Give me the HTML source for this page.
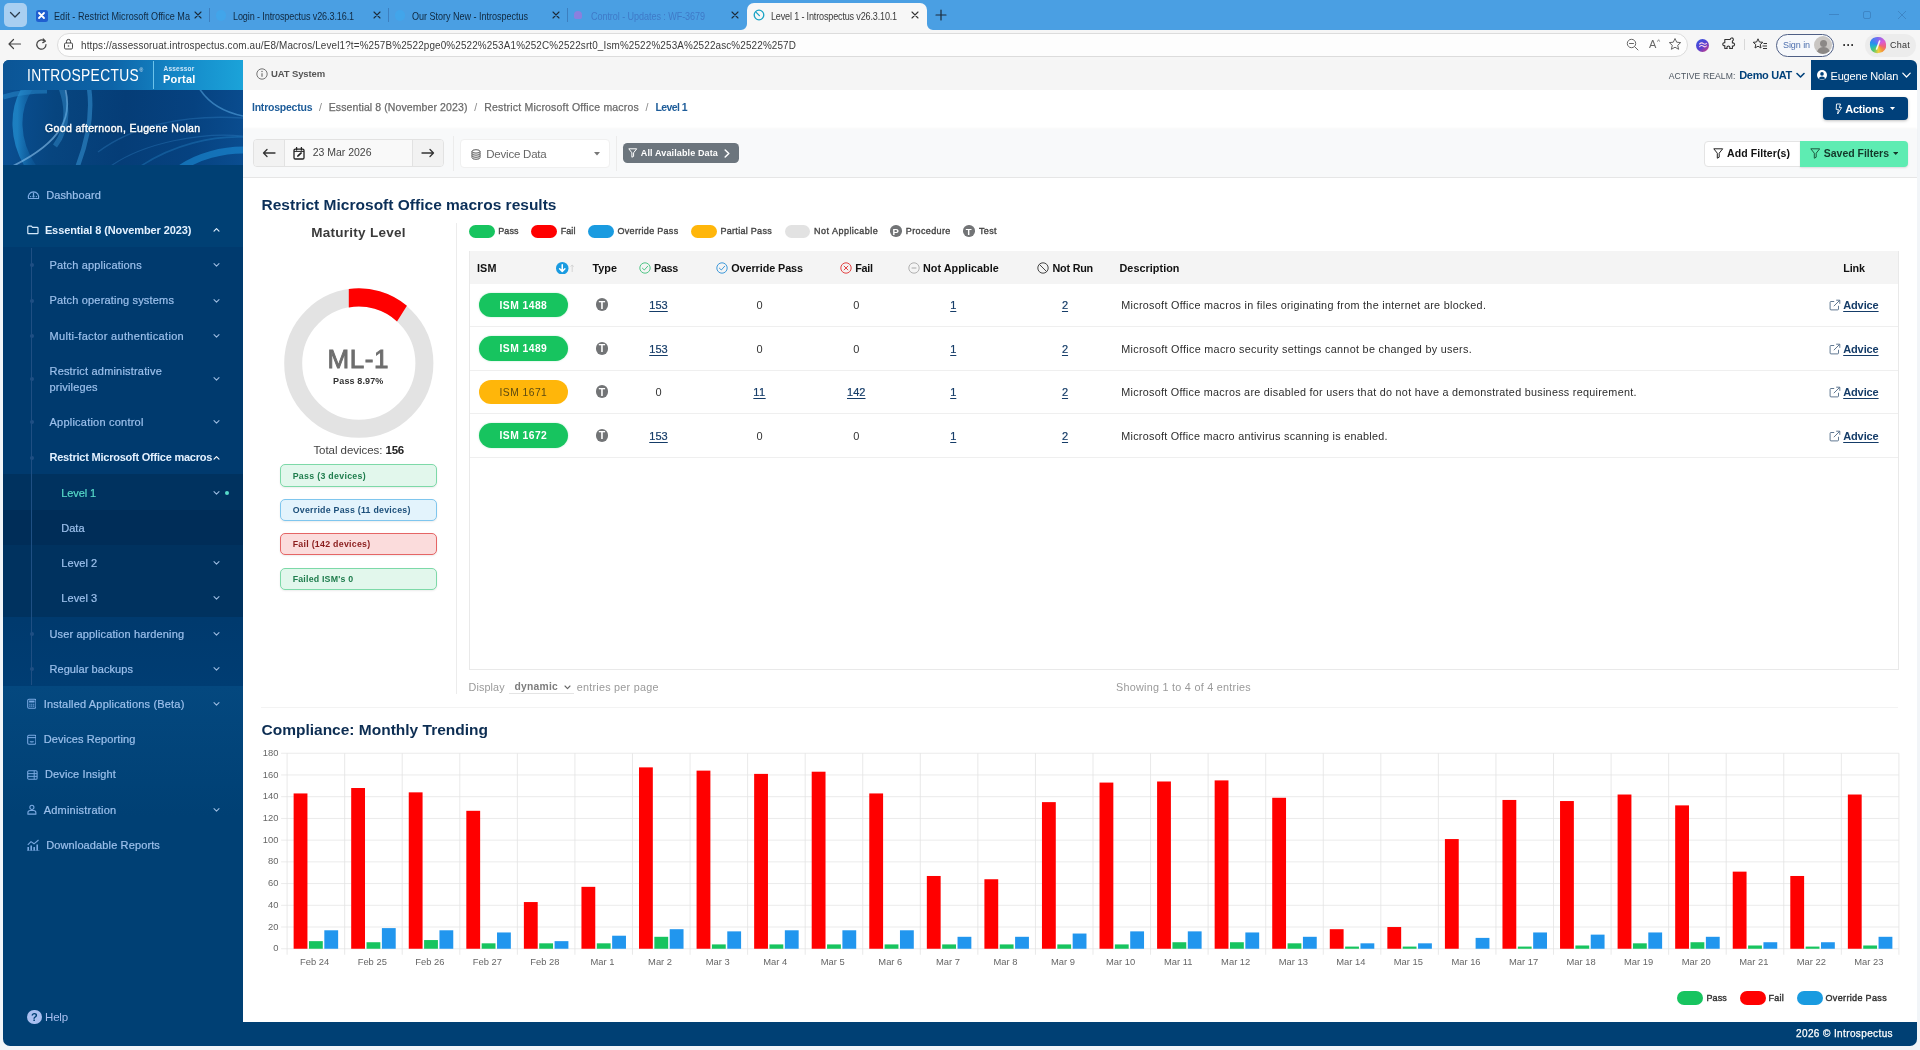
<!DOCTYPE html>
<html lang="en"><head><meta charset="utf-8"><title>Level 1 - Introspectus v26.3.10.1</title>
<style>
html,body{margin:0;padding:0;}
body{width:1920px;height:1050px;overflow:hidden;background:#f2f5f8;font-family:"Liberation Sans",sans-serif;}
#root{will-change:transform;position:relative;width:1920px;height:1050px;overflow:hidden;}
.b{position:absolute;box-sizing:border-box;}
.t{position:absolute;white-space:nowrap;}
.u{text-decoration:underline;text-decoration-thickness:1px;text-underline-offset:1.5px;}

</style></head>
<body>
<div id="root">
<div class="b" style="left:0px;top:0px;width:1920px;height:30px;background:#4a9fe3;"></div>
<div class="b" style="left:0px;top:30px;width:1920px;height:30px;background:#f6f6f6;"></div>
<div class="b" style="left:4px;top:3px;width:23px;height:24px;background:#a9cff1;border-radius:5px;"></div>
<svg class="b" style="left:9px;top:11px;" width="12" height="8" viewBox="0 0 12 8"><path d="M1.5 1.5 L6 6 L10.5 1.5" fill="none" stroke="#2b3a4a" stroke-width="1.3" stroke-linecap="round" stroke-linejoin="round"/></svg>
<div class="b" style="left:35.75px;top:9.5px;width:12px;height:12px;background:#1f5fd0;border-radius:2.5px;"></div>
<svg class="b" style="left:36.25px;top:10px;" width="11" height="11" viewBox="0 0 11 11"><path d="M3 3 L8 8 M8 3 L3 8" stroke="#fff" stroke-width="1.8" stroke-linecap="round"/></svg>
<span class="t " style="left:54px;top:9.70px;font-size:10.3px;line-height:14px;color:#10283f;letter-spacing:0.040px;transform:scaleX(0.88);transform-origin:0 50%;">Edit - Restrict Microsoft Office Ma</span>
<svg class="b" style="left:194px;top:11px;" width="8" height="8" viewBox="0 0 8 8"><path d="M1 1 L7 7 M7 1 L1 7" stroke="#1c2b3a" stroke-width="1.1" stroke-linecap="round"/></svg>
<div class="b" style="left:209px;top:8px;width:1px;height:14px;background:#3c7fc0;"></div>
<span class="t " style="left:233px;top:9.70px;font-size:10.3px;line-height:14px;color:#10283f;letter-spacing:-0.126px;transform:scaleX(0.88);transform-origin:0 50%;">Login - Introspectus v26.3.16.1</span>
<div class="b" style="left:215.5px;top:10px;width:10.5px;height:10.5px;background:#42a5ea;border-radius:50%;"></div>
<div class="b" style="left:394.5px;top:10px;width:10.5px;height:10.5px;background:#42a5ea;border-radius:50%;"></div>
<svg class="b" style="left:373px;top:11px;" width="8" height="8" viewBox="0 0 8 8"><path d="M1 1 L7 7 M7 1 L1 7" stroke="#1c2b3a" stroke-width="1.1" stroke-linecap="round"/></svg>
<div class="b" style="left:388px;top:8px;width:1px;height:14px;background:#3c7fc0;"></div>
<span class="t " style="left:412px;top:9.70px;font-size:10.3px;line-height:14px;color:#10283f;letter-spacing:-0.034px;transform:scaleX(0.88);transform-origin:0 50%;">Our Story New - Introspectus</span>
<svg class="b" style="left:552px;top:11px;" width="8" height="8" viewBox="0 0 8 8"><path d="M1 1 L7 7 M7 1 L1 7" stroke="#1c2b3a" stroke-width="1.1" stroke-linecap="round"/></svg>
<div class="b" style="left:567px;top:8px;width:1px;height:14px;background:#3c7fc0;"></div>
<div class="b" style="left:574px;top:11px;width:8px;height:8px;background:#9a78dc;border-radius:50% 50% 2px 2px;opacity:.8;"></div>
<span class="t " style="left:591px;top:9.70px;font-size:10.3px;line-height:14px;color:#3f7ac8;letter-spacing:-0.077px;transform:scaleX(0.88);transform-origin:0 50%;">Control - Updates : WF-3679</span>
<svg class="b" style="left:731px;top:11px;" width="8" height="8" viewBox="0 0 8 8"><path d="M1 1 L7 7 M7 1 L1 7" stroke="#1c2b3a" stroke-width="1.1" stroke-linecap="round"/></svg>
<div class="b" style="left:747px;top:3px;width:180px;height:27px;background:#f7f7f7;border-radius:7px 7px 0 0;"></div>
<svg class="b" style="left:741px;top:24px;" width="6" height="6" viewBox="0 0 6 6"><path d="M6 0 V6 H0 A6 6 0 0 0 6 0Z" fill="#f7f7f7"/></svg>
<svg class="b" style="left:927px;top:24px;" width="6" height="6" viewBox="0 0 6 6"><path d="M0 0 V6 H6 A6 6 0 0 1 0 0Z" fill="#f7f7f7"/></svg>
<svg class="b" style="left:753px;top:9px;" width="12" height="12" viewBox="0 0 12 12"><circle cx="6" cy="6" r="4.8" fill="none" stroke="#19a3c4" stroke-width="1.3"/><path d="M3.2 3.4 L6.4 6.6" stroke="#19a3c4" stroke-width="1.3" stroke-linecap="round"/></svg>
<span class="t " style="left:771px;top:9.70px;font-size:10.3px;line-height:14px;color:#3a3a3a;letter-spacing:-0.189px;transform:scaleX(0.88);transform-origin:0 50%;">Level 1 - Introspectus v26.3.10.1</span>
<svg class="b" style="left:911px;top:11px;" width="8" height="8" viewBox="0 0 8 8"><path d="M1 1 L7 7 M7 1 L1 7" stroke="#333" stroke-width="1.1" stroke-linecap="round"/></svg>
<svg class="b" style="left:935px;top:9px;" width="12" height="12" viewBox="0 0 12 12"><path d="M6 1 V11 M1 6 H11" stroke="#1c2b3a" stroke-width="1.2" stroke-linecap="round"/></svg>
<div class="b" style="left:1829px;top:14px;width:10px;height:1px;background:#3e86c6;"></div>
<div class="b" style="left:1863px;top:11px;width:8px;height:8px;border:1px solid #3e86c6;border-radius:2px;"></div>
<svg class="b" style="left:1897px;top:10px;" width="10" height="10" viewBox="0 0 10 10"><path d="M1 1 L9 9 M9 1 L1 9" stroke="#3e86c6" stroke-width="1"/></svg>
<svg class="b" style="left:7px;top:38px;" width="15" height="12" viewBox="0 0 15 12"><path d="M13.5 6 H2 M6.5 1.5 L2 6 L6.5 10.5" fill="none" stroke="#444" stroke-width="1.2" stroke-linecap="round" stroke-linejoin="round"/></svg>
<svg class="b" style="left:35px;top:38px;" width="13" height="13" viewBox="0 0 13 13"><path d="M11 6.5 A4.6 4.6 0 1 1 9.2 2.9" fill="none" stroke="#444" stroke-width="1.2" stroke-linecap="round"/><path d="M8.2 1 L10.4 3.2 L7.8 4.6" fill="none" stroke="#444" stroke-width="1.2" stroke-linecap="round" stroke-linejoin="round"/></svg>
<div class="b" style="left:57px;top:33px;width:1631px;height:24px;background:#fdfdfd;border-radius:12px;border:1px solid #dcdcdc;"></div>
<svg class="b" style="left:63px;top:38px;" width="11" height="12" viewBox="0 0 11 12"><rect x="1.5" y="5" width="8" height="6" rx="1.2" fill="none" stroke="#444" stroke-width="1"/><path d="M3.5 5 V3.4 A2 2 0 0 1 7.5 3.4 V5" fill="none" stroke="#444" stroke-width="1"/><circle cx="5.5" cy="8" r=".8" fill="#444"/></svg>
<span class="t " style="left:81px;top:37.50px;font-size:11px;line-height:15px;color:#3a3a3a;letter-spacing:0.154px;transform:scaleX(0.9);transform-origin:0 50%;">https://assessoruat.introspectus.com.au/E8/Macros/Level1?t=%257B%2522pge0%2522%253A1%252C%2522srt0_Ism%2522%253A%2522asc%2522%257D</span>
<svg class="b" style="left:1626px;top:38px;" width="13" height="13" viewBox="0 0 13 13"><circle cx="5.5" cy="5.5" r="4.2" fill="none" stroke="#666" stroke-width="1"/><path d="M3.5 5.5 H7.5 M8.7 8.7 L12 12" stroke="#666" stroke-width="1" stroke-linecap="round"/></svg>
<span class="t " style="left:1649px;top:37.00px;font-size:11px;line-height:15px;color:#666;">A</span>
<span class="t " style="left:1657px;top:36.50px;font-size:7px;line-height:10px;color:#666;">ᴬ</span>
<svg class="b" style="left:1668px;top:37px;" width="14" height="14" viewBox="0 0 14 14"><path d="M7 1.5 L8.7 5.2 L12.7 5.6 L9.7 8.3 L10.6 12.3 L7 10.2 L3.4 12.3 L4.3 8.3 L1.3 5.6 L5.3 5.2 Z" fill="none" stroke="#666" stroke-width="1" stroke-linejoin="round"/></svg>
<div class="b" style="left:1696px;top:38.5px;width:13px;height:13px;background:linear-gradient(140deg,#3558e0 0%,#5a3fd0 55%,#e0407a 100%);border-radius:50%;"></div>
<svg class="b" style="left:1698.5px;top:42px;" width="8" height="6" viewBox="0 0 8 6"><path d="M.6 2 C2 .6 3.4 .8 4.4 1.6 S6.6 2.4 7.4 1.4 M.6 4.6 C2 3.2 3.4 3.4 4.4 4.2 S6.6 5 7.4 4" fill="none" stroke="#ffd6e6" stroke-width="1.1" stroke-linecap="round"/></svg>
<svg class="b" style="left:1722px;top:37px;" width="14" height="14" viewBox="0 0 14 14"><path d="M5 2.5 H8.2 A1.6 1.6 0 1 1 10.4 4 V6 A1.6 1.6 0 1 1 10.4 9 V11.5 H7.6 A1.5 1.5 0 1 0 5.2 11.5 H2.8 V8.6 A1.5 1.5 0 1 1 2.8 5.8 V2.5 Z" fill="none" stroke="#333" stroke-width="1.1" stroke-linejoin="round"/></svg>
<div class="b" style="left:1744px;top:39px;width:1px;height:11px;background:#d8d8d8;"></div>
<svg class="b" style="left:1752px;top:37px;" width="16" height="14" viewBox="0 0 16 14"><path d="M6 1.8 L7.4 5 L10.8 5.3 L8.2 7.6 L9 11 L6 9.2 L3 11 L3.8 7.6 L1.2 5.3 L4.6 5 Z" fill="none" stroke="#333" stroke-width="1" stroke-linejoin="round"/><path d="M11.5 6.5 H15 M10.5 9 H15 M11 11.5 H15" stroke="#333" stroke-width="1"/></svg>
<div class="b" style="left:1776px;top:33.5px;width:58px;height:23px;background:#f6f8fb;border:1px solid #4f5f85;border-radius:12px;"></div>
<span class="t " style="left:1783px;top:38.80px;font-size:9px;line-height:13px;color:#4d6fae;letter-spacing:-0.076px;">Sign in</span>
<div class="b" style="left:1814px;top:36px;width:18px;height:18px;background:#c9c6c3;border-radius:50%;overflow:hidden;"><div class="b" style="left:5.5px;top:3.5px;width:7px;height:7px;border-radius:50%;background:#8b8886"></div><div class="b" style="left:2.5px;top:11px;width:13px;height:9px;border-radius:6px 6px 0 0;background:#8b8886"></div></div>
<span class="t " style="left:1848.5px;top:36.50px;font-size:12px;line-height:17px;color:#333;font-weight:700;transform:translateX(-50%);">···</span>
<div class="b" style="left:1865px;top:33.5px;width:51px;height:23.5px;background:#ececec;border-radius:12px;"></div>
<div class="b" style="left:1869.5px;top:37px;width:16px;height:15.5px;background:conic-gradient(from 300deg,#2a8cf0,#7a6bf0 18%,#d85ad8 34%,#f0647a 48%,#f2963c 58%,#f2cf3c 68%,#4fc870 80%,#22b5c8 90%,#2a8cf0);border-radius:42% 48% 46% 44%;transform:rotate(-8deg);"></div>
<svg class="b" style="left:1873.5px;top:40px;" width="8" height="10" viewBox="0 0 8 10"><path d="M5.6 1 L2.6 9" stroke="#fff" stroke-width="1.6" stroke-linecap="round" opacity=".9"/></svg>
<span class="t " style="left:1890px;top:38.50px;font-size:9px;line-height:13px;color:#333;letter-spacing:0.246px;">Chat</span>
<div class="b" style="left:3px;top:60px;width:240px;height:986px;background:#004074;border-radius:6px 0 0 7px;overflow:hidden;"><div class="b" style="left:0px;top:0px;width:240px;height:30px;background:linear-gradient(90deg,#0b5596 0%,#0d64a8 45%,#158ac9 75%,#1ba3d9 100%);"></div><div class="b" style="left:0px;top:30px;width:240px;height:75px;background:linear-gradient(95deg,#0a5094 0%,#07457f 22%,#053d77 50%,#064280 78%,#0a4d90 100%);overflow:hidden;"><svg width="240" height="75" viewBox="0 0 240 75" style="position:absolute;left:0;top:0"><defs><linearGradient id="gA" x1="0" y1="0" x2="1" y2="0"><stop offset="0" stop-color="#2596d8" stop-opacity=".85"/><stop offset="1" stop-color="#1670b4" stop-opacity=".35"/></linearGradient></defs><path d="M26 -4 C10 18 10 52 30 80" fill="none" stroke="url(#gA)" stroke-width="10" opacity=".8"/><path d="M62 -2 C70 28 58 52 10 76" fill="none" stroke="#8cc3ee" stroke-width="1.8" opacity=".6"/><path d="M58 -2 C66 20 64 40 52 56" fill="none" stroke="#3d9ada" stroke-width="5" opacity=".4"/><path d="M86 -2 C90 25 84 52 74 78" fill="none" stroke="#3a9bdc" stroke-width="4.5" opacity=".5"/><path d="M0 7 C14 3 30 1 44 1" fill="none" stroke="#2a8dd0" stroke-width="5" opacity=".5"/><path d="M95 62 C130 36 180 24 240 28" fill="none" stroke="#3a8fd0" stroke-width="1.3" opacity=".3"/><path d="M105 78 C140 52 200 42 240 46" fill="none" stroke="#3a8fd0" stroke-width="1.2" opacity=".3"/><path d="M196 -2 C206 14 220 22 240 26" fill="none" stroke="#5aaae4" stroke-width="1.6" opacity=".55"/><path d="M178 78 C195 66 220 60 240 60" fill="none" stroke="#1c8fd8" stroke-width="7" opacity=".6"/><path d="M135 78 C170 54 210 46 240 47" fill="none" stroke="#2f95d8" stroke-width="1.6" opacity=".3"/></svg></div><div class="b" style="left:0px;top:187px;width:240px;height:439px;background:linear-gradient(180deg,#003a6e 0%,#003a6e 85%,#003d73 100%);"></div><div class="b" style="left:0px;top:414px;width:240px;height:35.5px;background:#00325f;"></div><div class="b" style="left:0px;top:449.5px;width:240px;height:35.5px;background:#002d58;"></div><div class="b" style="left:0px;top:485px;width:240px;height:71.5px;background:#00325f;"></div><div class="b" style="left:0px;top:626px;width:240px;height:130px;background:linear-gradient(180deg,#04487f 0%,#004074 100%);"></div><div class="b" style="left:28px;top:188px;width:1px;height:437px;background:#1f4f83;"></div><div class="b" style="left:26.5px;top:203.2px;width:4px;height:4px;background:#1f4f83;border-radius:50%;"></div><div class="b" style="left:26.5px;top:238.5px;width:4px;height:4px;background:#1f4f83;border-radius:50%;"></div><div class="b" style="left:26.5px;top:273.9px;width:4px;height:4px;background:#1f4f83;border-radius:50%;"></div><div class="b" style="left:26.5px;top:316.5px;width:4px;height:4px;background:#1f4f83;border-radius:50%;"></div><div class="b" style="left:26.5px;top:360.2px;width:4px;height:4px;background:#1f4f83;border-radius:50%;"></div><div class="b" style="left:26.5px;top:395.5px;width:4px;height:4px;background:#1f4f83;border-radius:50%;"></div><div class="b" style="left:26.5px;top:571.7px;width:4px;height:4px;background:#1f4f83;border-radius:50%;"></div><div class="b" style="left:26.5px;top:607px;width:4px;height:4px;background:#1f4f83;border-radius:50%;"></div><span class="t " style="left:23.6px;top:4.80px;font-size:15.7px;line-height:22px;color:#fff;letter-spacing:0.364px;transform:scaleX(0.88);transform-origin:0 50%;">INTROSPECTUS</span><span class="t " style="left:136.5px;top:7.00px;font-size:5px;line-height:7px;color:#dbe9f7;">®</span><div class="b" style="left:150.2px;top:1px;width:1px;height:28px;background:#6cc3ea;"></div><span class="t " style="left:160.5px;top:4.30px;font-size:6.5px;line-height:9px;color:#cfe6f8;font-weight:700;letter-spacing:0.215px;">Assessor</span><span class="t " style="left:160px;top:11.50px;font-size:11px;line-height:15px;color:#fff;font-weight:700;letter-spacing:0.219px;">Portal</span><span class="t " style="left:42px;top:60.50px;font-size:10.5px;line-height:15px;color:#fff;letter-spacing:0.362px;-webkit-text-stroke:.4px #fff;text-shadow:0 1px 2px rgba(0,0,0,.35);">Good afternoon, Eugene Nolan</span><svg class="b" style="left:23.5px;top:129px;" width="13" height="12" viewBox="0 0 13 12"><path d="M1.5 9.5 A5.2 5.2 0 1 1 11.5 9.5 Z" fill="none" stroke="#7aa9e2" stroke-width="1.2" stroke-linejoin="round"/><path d="M6.5 3.5 V7" stroke="#7aa9e2" stroke-width="1.2"/><circle cx="6.5" cy="7.6" r="1.1" fill="#7aa9e2"/><circle cx="3.6" cy="7.6" r=".7" fill="#7aa9e2"/><circle cx="9.4" cy="7.6" r=".7" fill="#7aa9e2"/></svg><span class="t " style="left:43.2px;top:127.50px;font-size:11px;line-height:15px;color:#9cc0ec;letter-spacing:0.108px;-webkit-text-stroke:.2px #9cc0ec;">Dashboard</span><svg class="b" style="left:23.5px;top:165.4px;" width="12" height="10" viewBox="0 0 12 10"><path d="M.8 1.9 A.8 .8 0 0 1 1.6 1.1 H4.4 L5.5 2.3 H10.2 A.8 .8 0 0 1 11 3.1 V7.9 A.8 .8 0 0 1 10.2 8.7 H1.6 A.8 .8 0 0 1 .8 7.9 Z" fill="none" stroke="#d4e9fb" stroke-width="1.2" stroke-linejoin="round"/></svg><span class="t " style="left:41.9px;top:162.90px;font-size:11px;line-height:15px;color:#e3f1ff;font-weight:700;letter-spacing:-0.103px;">Essential 8 (November 2023)</span><svg class="b" style="left:209.8px;top:167.4px;" width="7" height="6" viewBox="0 0 7 6"><path d="M1 4.2 L3.5 1.6 L6 4.2" fill="none" stroke="#e3f1ff" stroke-width="1.1" stroke-linecap="round" stroke-linejoin="round"/></svg><span class="t " style="left:46.5px;top:198.10px;font-size:11px;line-height:15px;color:#9cc0ec;letter-spacing:0.168px;-webkit-text-stroke:.2px #9cc0ec;">Patch applications</span><svg class="b" style="left:209.8px;top:202.2px;" width="7" height="6" viewBox="0 0 7 6"><path d="M1 1.6 L3.5 4.2 L6 1.6" fill="none" stroke="#9bbbe0" stroke-width="1.1" stroke-linecap="round" stroke-linejoin="round"/></svg><span class="t " style="left:46.5px;top:233.40px;font-size:11px;line-height:15px;color:#9cc0ec;letter-spacing:0.180px;-webkit-text-stroke:.2px #9cc0ec;">Patch operating systems</span><svg class="b" style="left:209.8px;top:237.5px;" width="7" height="6" viewBox="0 0 7 6"><path d="M1 1.6 L3.5 4.2 L6 1.6" fill="none" stroke="#9bbbe0" stroke-width="1.1" stroke-linecap="round" stroke-linejoin="round"/></svg><span class="t " style="left:46.5px;top:268.80px;font-size:11px;line-height:15px;color:#9cc0ec;letter-spacing:0.317px;-webkit-text-stroke:.2px #9cc0ec;">Multi-factor authentication</span><svg class="b" style="left:209.8px;top:272.9px;" width="7" height="6" viewBox="0 0 7 6"><path d="M1 1.6 L3.5 4.2 L6 1.6" fill="none" stroke="#9bbbe0" stroke-width="1.1" stroke-linecap="round" stroke-linejoin="round"/></svg><span class="t " style="left:46.5px;top:303.70px;font-size:11px;line-height:15px;color:#9cc0ec;letter-spacing:0.187px;-webkit-text-stroke:.2px #9cc0ec;">Restrict administrative</span><span class="t " style="left:46.5px;top:319.60px;font-size:11px;line-height:15px;color:#9cc0ec;letter-spacing:0.183px;-webkit-text-stroke:.2px #9cc0ec;">privileges</span><svg class="b" style="left:209.8px;top:315.5px;" width="7" height="6" viewBox="0 0 7 6"><path d="M1 1.6 L3.5 4.2 L6 1.6" fill="none" stroke="#9bbbe0" stroke-width="1.1" stroke-linecap="round" stroke-linejoin="round"/></svg><span class="t " style="left:46.5px;top:355.10px;font-size:11px;line-height:15px;color:#9cc0ec;letter-spacing:0.222px;-webkit-text-stroke:.2px #9cc0ec;">Application control</span><svg class="b" style="left:209.8px;top:359.2px;" width="7" height="6" viewBox="0 0 7 6"><path d="M1 1.6 L3.5 4.2 L6 1.6" fill="none" stroke="#9bbbe0" stroke-width="1.1" stroke-linecap="round" stroke-linejoin="round"/></svg><span class="t " style="left:46.5px;top:390.40px;font-size:11px;line-height:15px;color:#e3f1ff;font-weight:700;letter-spacing:-0.226px;">Restrict Microsoft Office macros</span><svg class="b" style="left:209.8px;top:394.5px;" width="7" height="6" viewBox="0 0 7 6"><path d="M1 4.2 L3.5 1.6 L6 4.2" fill="none" stroke="#fff" stroke-width="1.1" stroke-linecap="round" stroke-linejoin="round"/></svg><span class="t " style="left:58.3px;top:425.80px;font-size:11px;line-height:15px;color:#57dbc9;letter-spacing:-0.126px;-webkit-text-stroke:.2px #57dbc9;">Level 1</span><svg class="b" style="left:209.8px;top:429.9px;" width="7" height="6" viewBox="0 0 7 6"><path d="M1 1.6 L3.5 4.2 L6 1.6" fill="none" stroke="#9bbbe0" stroke-width="1.1" stroke-linecap="round" stroke-linejoin="round"/></svg><div class="b" style="left:222.1px;top:430.5px;width:4.4px;height:4.4px;background:#57dbc9;border-radius:50%;"></div><span class="t " style="left:58.3px;top:461.10px;font-size:11px;line-height:15px;color:#9cc0ec;letter-spacing:-0.013px;-webkit-text-stroke:.2px #9cc0ec;">Data</span><span class="t " style="left:58.3px;top:495.90px;font-size:11px;line-height:15px;color:#9cc0ec;letter-spacing:0.059px;-webkit-text-stroke:.2px #9cc0ec;">Level 2</span><svg class="b" style="left:209.8px;top:500px;" width="7" height="6" viewBox="0 0 7 6"><path d="M1 1.6 L3.5 4.2 L6 1.6" fill="none" stroke="#9bbbe0" stroke-width="1.1" stroke-linecap="round" stroke-linejoin="round"/></svg><span class="t " style="left:58.3px;top:531.30px;font-size:11px;line-height:15px;color:#9cc0ec;letter-spacing:0.059px;-webkit-text-stroke:.2px #9cc0ec;">Level 3</span><svg class="b" style="left:209.8px;top:535.4px;" width="7" height="6" viewBox="0 0 7 6"><path d="M1 1.6 L3.5 4.2 L6 1.6" fill="none" stroke="#9bbbe0" stroke-width="1.1" stroke-linecap="round" stroke-linejoin="round"/></svg><span class="t " style="left:46.5px;top:566.60px;font-size:11px;line-height:15px;color:#9cc0ec;letter-spacing:0.147px;-webkit-text-stroke:.2px #9cc0ec;">User application hardening</span><svg class="b" style="left:209.8px;top:570.7px;" width="7" height="6" viewBox="0 0 7 6"><path d="M1 1.6 L3.5 4.2 L6 1.6" fill="none" stroke="#9bbbe0" stroke-width="1.1" stroke-linecap="round" stroke-linejoin="round"/></svg><span class="t " style="left:46.5px;top:601.90px;font-size:11px;line-height:15px;color:#9cc0ec;letter-spacing:0.062px;-webkit-text-stroke:.2px #9cc0ec;">Regular backups</span><svg class="b" style="left:209.8px;top:606px;" width="7" height="6" viewBox="0 0 7 6"><path d="M1 1.6 L3.5 4.2 L6 1.6" fill="none" stroke="#9bbbe0" stroke-width="1.1" stroke-linecap="round" stroke-linejoin="round"/></svg><svg class="b" style="left:23.8px;top:638.4px;" width="9.6" height="11.4" viewBox="0 0 11 12"><rect x=".8" y=".8" width="9.4" height="10.4" rx="1.4" fill="none" stroke="#7aa9e2" stroke-width="1.2"/><rect x="2.4" y="2.4" width="6.2" height="2.2" fill="#7aa9e2"/><path d="M2.6 6.6 H4 M4.8 6.6 H6.2 M7 6.6 H8.4 M2.6 8.8 H4 M4.8 8.8 H6.2 M7 8.8 H8.4" stroke="#7aa9e2" stroke-width="1.2"/></svg><span class="t " style="left:40.7px;top:636.60px;font-size:11px;line-height:15px;color:#9cc0ec;letter-spacing:0.174px;-webkit-text-stroke:.2px #9cc0ec;">Installed Applications (Beta)</span><svg class="b" style="left:209.8px;top:641.1px;" width="7" height="6" viewBox="0 0 7 6"><path d="M1 1.6 L3.5 4.2 L6 1.6" fill="none" stroke="#9bbbe0" stroke-width="1.1" stroke-linecap="round" stroke-linejoin="round"/></svg><svg class="b" style="left:23.8px;top:673.8px;" width="9.6" height="11.4" viewBox="0 0 11 12"><rect x=".8" y=".8" width="9.4" height="10.4" rx="1.4" fill="none" stroke="#7aa9e2" stroke-width="1.2"/><path d="M.8 3.6 H10.2" stroke="#7aa9e2" stroke-width="1.2"/><path d="M3 7.8 A2.5 1.5 0 0 0 8 7.8 Z" fill="#7aa9e2"/></svg><span class="t " style="left:40.7px;top:672.00px;font-size:11px;line-height:15px;color:#9cc0ec;letter-spacing:0.113px;-webkit-text-stroke:.2px #9cc0ec;">Devices Reporting</span><svg class="b" style="left:23.8px;top:709.8px;" width="10.8" height="10" viewBox="0 0 12 11"><rect x=".8" y=".8" width="10.4" height="9.4" rx="1.2" fill="none" stroke="#7aa9e2" stroke-width="1.2"/><path d="M.8 4 H11.2 M.8 7 H11.2 M8 .8 V10.2" stroke="#7aa9e2" stroke-width="1.1"/></svg><span class="t " style="left:41.9px;top:707.30px;font-size:11px;line-height:15px;color:#9cc0ec;letter-spacing:0.143px;-webkit-text-stroke:.2px #9cc0ec;">Device Insight</span><svg class="b" style="left:23.8px;top:744.3px;" width="9.8" height="11.4" viewBox="0 0 11 12"><circle cx="5.5" cy="3.4" r="2.3" fill="none" stroke="#7aa9e2" stroke-width="1.2"/><path d="M1 11 V9.6 A2.6 2.6 0 0 1 3.6 7 H7.4 A2.6 2.6 0 0 1 10 9.6 V11 Z" fill="none" stroke="#7aa9e2" stroke-width="1.2" stroke-linejoin="round"/></svg><span class="t " style="left:40.7px;top:742.50px;font-size:11px;line-height:15px;color:#9cc0ec;letter-spacing:0.207px;-webkit-text-stroke:.2px #9cc0ec;">Administration</span><svg class="b" style="left:209.8px;top:747px;" width="7" height="6" viewBox="0 0 7 6"><path d="M1 1.6 L3.5 4.2 L6 1.6" fill="none" stroke="#9bbbe0" stroke-width="1.1" stroke-linecap="round" stroke-linejoin="round"/></svg><svg class="b" style="left:23.5px;top:779px;" width="13" height="12" viewBox="0 0 13 12"><path d="M1.2 11.5 V8 M4.2 11.5 V6.5 M7.2 11.5 V8 M10.2 11.5 V5.5" stroke="#7aa9e2" stroke-width="1.6"/><path d="M.8 5.8 L4 2.6 L7 4.8 L11.5 1" fill="none" stroke="#7aa9e2" stroke-width="1.1"/><path d="M0 12 H12.5" stroke="#7aa9e2" stroke-width=".8"/></svg><span class="t " style="left:43.2px;top:777.50px;font-size:11px;line-height:15px;color:#9cc0ec;letter-spacing:0.125px;-webkit-text-stroke:.2px #9cc0ec;">Downloadable Reports</span><div class="b" style="left:24px;top:949.5px;width:14.6px;height:14.6px;background:#a9bff0;border-radius:50%;"></div><span class="t " style="left:31.299999999999997px;top:949.50px;font-size:11px;line-height:15px;color:#004074;font-weight:700;transform:translateX(-50%);">?</span><span class="t " style="left:42px;top:948.80px;font-size:11.5px;line-height:16px;color:#a9bff0;letter-spacing:-0.164px;">Help</span></div>
<div class="b" style="left:243px;top:60px;width:1674px;height:962px;background:#fff;"></div>
<div class="b" style="left:243px;top:60px;width:1674px;height:30px;background:#f5f5f5;"></div>
<svg class="b" style="left:255.5px;top:67.8px;" width="12" height="12" viewBox="0 0 12 12"><circle cx="6" cy="6" r="5.2" fill="none" stroke="#666" stroke-width=".9"/><path d="M6 5.2 V8.8" stroke="#666" stroke-width="1.1"/><circle cx="6" cy="3.5" r=".7" fill="#666"/></svg>
<span class="t " style="left:271px;top:67.10px;font-size:9.5px;line-height:13px;color:#555;font-weight:700;letter-spacing:-0.127px;">UAT System</span>
<span class="t " style="left:1668.75px;top:70.00px;font-size:8.6px;line-height:12px;color:#4c5560;letter-spacing:0.101px;">ACTIVE REALM:</span>
<span class="t " style="left:1739.25px;top:68.00px;font-size:11px;line-height:15px;color:#00417a;font-weight:700;letter-spacing:-0.334px;">Demo UAT</span>
<svg class="b" style="left:1796px;top:71.5px;" width="9" height="7" viewBox="0 0 9 7"><path d="M1 1.5 L4.5 5 L8 1.5" fill="none" stroke="#00417a" stroke-width="1.6" stroke-linecap="round" stroke-linejoin="round"/></svg>
<div class="b" style="left:1810.5px;top:60px;width:106.5px;height:30px;background:#00417a;border-radius:0 6px 0 0;"></div>
<svg class="b" style="left:1816.75px;top:70px;" width="10" height="10" viewBox="0 0 10 10"><circle cx="5" cy="5" r="5" fill="#fff"/><circle cx="5" cy="3.9" r="1.8" fill="#00417a"/><path d="M1.8 8.2 A3.4 2.6 0 0 1 8.2 8.2 A4.6 4.6 0 0 1 1.8 8.2Z" fill="#00417a"/></svg>
<span class="t " style="left:1830.5px;top:68.50px;font-size:11px;line-height:15px;color:#fff;letter-spacing:-0.165px;">Eugene Nolan</span>
<svg class="b" style="left:1902px;top:72px;" width="9" height="7" viewBox="0 0 9 7"><path d="M.8 1.2 L4.5 5 L8.2 1.2" fill="none" stroke="#fff" stroke-width="1.2" stroke-linecap="round" stroke-linejoin="round"/></svg>
<span class="t " style="left:252px;top:100.00px;font-size:10.5px;line-height:15px;color:#1d5c99;font-weight:700;letter-spacing:-0.230px;">Introspectus</span>
<span class="t " style="left:320.5px;top:100.00px;font-size:10.5px;line-height:15px;color:#888;transform:translateX(-50%);">/</span>
<span class="t " style="left:328.75px;top:100.00px;font-size:10.5px;line-height:15px;color:#6b6b6b;letter-spacing:0.102px;-webkit-text-stroke:.25px #6b6b6b;">Essential 8 (November 2023)</span>
<span class="t " style="left:475.75px;top:100.00px;font-size:10.5px;line-height:15px;color:#888;transform:translateX(-50%);">/</span>
<span class="t " style="left:484.25px;top:100.00px;font-size:10.5px;line-height:15px;color:#6b6b6b;letter-spacing:0.192px;-webkit-text-stroke:.25px #6b6b6b;">Restrict Microsoft Office macros</span>
<span class="t " style="left:647px;top:100.00px;font-size:10.5px;line-height:15px;color:#888;transform:translateX(-50%);">/</span>
<span class="t " style="left:655.5px;top:100.00px;font-size:10.5px;line-height:15px;color:#1d5c99;font-weight:700;letter-spacing:-0.587px;">Level 1</span>
<div class="b" style="left:1822.5px;top:97px;width:85.5px;height:22.7px;background:#00407a;border-radius:4px;box-shadow:0 1px 3px rgba(0,0,0,.25);"></div>
<svg class="b" style="left:1834.5px;top:102.5px;" width="8" height="12" viewBox="0 0 8 12"><path d="M1.5 1 H5.5 L4.3 4.6 H6.6 L2.6 11 L3.4 6.4 H1.2 Z" fill="none" stroke="#fff" stroke-width=".9" stroke-linejoin="round"/></svg>
<span class="t " style="left:1845.25px;top:101.50px;font-size:11px;line-height:15px;color:#fff;font-weight:700;letter-spacing:-0.228px;">Actions</span>
<svg class="b" style="left:1890px;top:107px;" width="5" height="3" viewBox="0 0 5 3"><path d="M0 0 H5 L2.5 3Z" fill="#fff"/></svg>
<div class="b" style="left:243px;top:129px;width:1674px;height:49px;background:#f8f9fa;border-bottom:1px solid #e6e6e6;box-shadow:0 -1px 2px rgba(0,0,0,.03);"></div>
<div class="b" style="left:252.5px;top:139.25px;width:191.5px;height:27.5px;background:#f9f9f9;border:1px solid #e2e2e2;border-radius:4px;overflow:hidden;"><div class="b" style="left:0;top:0;width:31.5px;height:26px;background:#f2f2f2;border-right:1px solid #e2e2e2"></div><div class="b" style="left:158.5px;top:0;width:32px;height:26px;background:#f2f2f2;border-left:1px solid #e2e2e2"></div></div>
<svg class="b" style="left:262px;top:147.5px;" width="14" height="10" viewBox="0 0 14 10"><path d="M13 5 H1.5 M5 1.5 L1.5 5 L5 8.5" fill="none" stroke="#333" stroke-width="1.3" stroke-linecap="round" stroke-linejoin="round"/></svg>
<svg class="b" style="left:421px;top:147.5px;" width="14" height="10" viewBox="0 0 14 10"><path d="M1 5 H12.5 M9 1.5 L12.5 5 L9 8.5" fill="none" stroke="#333" stroke-width="1.3" stroke-linecap="round" stroke-linejoin="round"/></svg>
<svg class="b" style="left:293px;top:147px;" width="12" height="13" viewBox="0 0 12 13"><rect x="1" y="2.2" width="10" height="9.8" rx="1.3" fill="none" stroke="#222" stroke-width="1.3"/><path d="M3.6 .6 V3 M8.4 .6 V3" stroke="#222" stroke-width="1.3" stroke-linecap="round"/><path d="M1 4.4 H11" stroke="#222" stroke-width="1"/><path d="M4 10 L4.4 8.2 L8 4.9 L9.2 6.1 L5.7 9.5 Z" fill="#222"/></svg>
<span class="t " style="left:312.75px;top:145.00px;font-size:10.5px;line-height:15px;color:#444;letter-spacing:-0.020px;">23 Mar 2026</span>
<div class="b" style="left:453px;top:135.5px;width:1px;height:35px;background:#ececec;"></div>
<div class="b" style="left:460px;top:139.25px;width:149.5px;height:28.5px;background:#fff;border:1px solid #f0f0f0;border-radius:4px;"></div>
<svg class="b" style="left:470.5px;top:149px;" width="10" height="11" viewBox="0 0 10 11"><ellipse cx="5" cy="2.4" rx="4" ry="1.7" fill="none" stroke="#5a5a5a" stroke-width="1"/><path d="M1 2.4 V8.6 A4 1.7 0 0 0 9 8.6 V2.4 M1 4.5 A4 1.7 0 0 0 9 4.5 M1 6.6 A4 1.7 0 0 0 9 6.6" fill="none" stroke="#5a5a5a" stroke-width="1"/></svg>
<span class="t " style="left:486.25px;top:146.10px;font-size:11.5px;line-height:16px;color:#666;letter-spacing:-0.217px;">Device Data</span>
<svg class="b" style="left:593.5px;top:151.5px;" width="6" height="4" viewBox="0 0 6 4"><path d="M0 0 H6 L3 3.6Z" fill="#777"/></svg>
<div class="b" style="left:616px;top:135.5px;width:1px;height:35px;background:#ececec;"></div>
<div class="b" style="left:622.5px;top:142.6px;width:116.5px;height:20.7px;background:#6c757d;border-radius:4.5px;"></div>
<svg class="b" style="left:628px;top:147.5px;" width="9.5" height="10" viewBox="0 0 9.5 10"><path d="M.8 .8 H8.7 L5.6 4.8 V8.4 L3.9 9.2 V4.8 Z" fill="none" stroke="#fff" stroke-width="1" stroke-linejoin="round"/></svg>
<span class="t " style="left:640.75px;top:147.00px;font-size:9px;line-height:13px;color:#fff;font-weight:700;letter-spacing:0.132px;">All Available Data</span>
<svg class="b" style="left:724px;top:148.5px;" width="6" height="9" viewBox="0 0 6 9"><path d="M1.2 1 L4.8 4.5 L1.2 8" fill="none" stroke="#fff" stroke-width="1.5" stroke-linecap="round" stroke-linejoin="round"/></svg>
<div class="b" style="left:1703.75px;top:140.5px;width:97px;height:26px;background:#fff;border:1px solid #e4e4e4;border-radius:4px 0 0 4px;"></div>
<svg class="b" style="left:1713px;top:148px;" width="10.5" height="11" viewBox="0 0 10.5 11"><path d="M.8 .8 H9.7 L6.2 5.2 V9.2 L4.3 10.2 V5.2 Z" fill="none" stroke="#222" stroke-width="1" stroke-linejoin="round"/></svg>
<span class="t " style="left:1727px;top:146.00px;font-size:10.5px;line-height:15px;color:#111;font-weight:700;letter-spacing:0.089px;">Add Filter(s)</span>
<div class="b" style="left:1800px;top:140.5px;width:108px;height:26px;background:#5eecb2;border-radius:0 4px 4px 0;box-shadow:0 1px 2px rgba(0,0,0,.12);"></div>
<svg class="b" style="left:1809.5px;top:148px;" width="10.5" height="11" viewBox="0 0 10.5 11"><path d="M.8 .8 H9.7 L6.2 5.2 V9.2 L4.3 10.2 V5.2 Z" fill="none" stroke="#1d5a40" stroke-width="1" stroke-linejoin="round"/></svg>
<span class="t " style="left:1823.75px;top:146.00px;font-size:10.5px;line-height:15px;color:#14382a;font-weight:700;letter-spacing:-0.010px;">Saved Filters</span>
<svg class="b" style="left:1892.5px;top:152px;" width="5.5" height="3" viewBox="0 0 5.5 3"><path d="M0 0 H5.5 L2.75 3Z" fill="#14382a"/></svg>
<span class="t " style="left:261.5px;top:194.20px;font-size:15.5px;line-height:22px;color:#0b2f58;font-weight:700;letter-spacing:0.010px;">Restrict Microsoft Office macros results</span>
<span class="t " style="left:358.5px;top:223.20px;font-size:13.5px;line-height:19px;color:#3a3a3a;font-weight:700;letter-spacing:0.266px;transform:translateX(-50%);">Maturity Level</span>
<div class="b" style="left:456px;top:222.5px;width:1px;height:471px;background:#ececec;"></div>
<svg class="b" style="left:270px;top:275px;" width="180" height="180" viewBox="0 0 180 180"><circle cx="88.80" cy="88.20" r="65.60" fill="none" stroke="#e3e3e3" stroke-width="18.00"/><path d="M78.80 13.97 A74.89999999999999 74.89999999999999 0 0 1 136.92 30.80 L127.02 46.45 A56.6 56.6 0 0 0 78.80 32.49 Z" fill="#ff0000"/></svg>
<span class="t " style="left:358.3px;top:341.30px;font-size:26px;line-height:36px;color:#6e6e6e;letter-spacing:0.562px;transform:translateX(-50%);-webkit-text-stroke:.9px #6e6e6e;">ML-1</span>
<span class="t " style="left:358.3px;top:374.50px;font-size:9px;line-height:13px;color:#333;font-weight:700;letter-spacing:0.135px;transform:translateX(-50%);">Pass 8.97%</span>
<span class="t " style="left:313.4px;top:442.00px;font-size:11.5px;line-height:16px;color:#444;letter-spacing:-0.049px;">Total devices:</span>
<span class="t " style="left:385.5px;top:442.00px;font-size:11.5px;line-height:16px;color:#222;font-weight:700;letter-spacing:-0.229px;">156</span>
<div class="b" style="left:279.6px;top:464.4px;width:157.8px;height:22.2px;background:#e2f7ec;border:1.2px solid #7dd9a8;border-radius:5px;box-shadow:0 1px 2px rgba(0,0,0,.08);"></div>
<span class="t " style="left:292.7px;top:469.50px;font-size:8.8px;line-height:12px;color:#1f7d4d;font-weight:700;letter-spacing:0.302px;">Pass (3 devices)</span>
<div class="b" style="left:279.6px;top:498.7px;width:157.8px;height:22.4px;background:#e3f3fc;border:1.2px solid #7fc6ee;border-radius:5px;box-shadow:0 1px 2px rgba(0,0,0,.08);"></div>
<span class="t " style="left:292.7px;top:503.90px;font-size:8.8px;line-height:12px;color:#1c4f7a;font-weight:700;letter-spacing:0.246px;">Override Pass (11 devices)</span>
<div class="b" style="left:279.6px;top:533.3px;width:157.8px;height:22.2px;background:#fbdcdc;border:1.2px solid #e56565;border-radius:5px;box-shadow:0 1px 2px rgba(0,0,0,.08);"></div>
<span class="t " style="left:292.7px;top:538.40px;font-size:8.8px;line-height:12px;color:#8a1c1c;font-weight:700;letter-spacing:0.274px;">Fail (142 devices)</span>
<div class="b" style="left:279.6px;top:568px;width:157.8px;height:22.2px;background:#e2f7ec;border:1.2px solid #7dd9a8;border-radius:5px;box-shadow:0 1px 2px rgba(0,0,0,.08);"></div>
<span class="t " style="left:292.7px;top:573.10px;font-size:8.8px;line-height:12px;color:#1f7d4d;font-weight:700;letter-spacing:0.198px;">Failed ISM&#x27;s 0</span>
<div class="b" style="left:468.75px;top:224.5px;width:25.75px;height:13px;background:#17c45f;border-radius:7px;"></div>
<span class="t " style="left:498.25px;top:224.50px;font-size:9px;line-height:13px;color:#444;letter-spacing:0.121px;-webkit-text-stroke:.35px #444;">Pass</span>
<div class="b" style="left:531.25px;top:224.5px;width:25.75px;height:13px;background:#ff0000;border-radius:7px;"></div>
<span class="t " style="left:560.75px;top:224.50px;font-size:9px;line-height:13px;color:#444;letter-spacing:0.059px;-webkit-text-stroke:.35px #444;">Fail</span>
<div class="b" style="left:588.25px;top:224.5px;width:25.75px;height:13px;background:#1a9be0;border-radius:7px;"></div>
<span class="t " style="left:617.5px;top:224.50px;font-size:9px;line-height:13px;color:#444;letter-spacing:0.305px;-webkit-text-stroke:.35px #444;">Override Pass</span>
<div class="b" style="left:690.75px;top:224.5px;width:25.75px;height:13px;background:#ffb60a;border-radius:7px;"></div>
<span class="t " style="left:720.5px;top:224.50px;font-size:9px;line-height:13px;color:#444;letter-spacing:0.289px;-webkit-text-stroke:.35px #444;">Partial Pass</span>
<div class="b" style="left:784.5px;top:224.5px;width:25.75px;height:13px;background:#e2e2e2;border-radius:7px;"></div>
<span class="t " style="left:814px;top:224.50px;font-size:9px;line-height:13px;color:#444;letter-spacing:0.479px;-webkit-text-stroke:.35px #444;">Not Applicable</span>
<div class="b" style="left:890.0px;top:225.25px;width:11.5px;height:11.5px;background:#727476;border-radius:50%;"></div>
<span class="t " style="left:895.75px;top:224.70px;font-size:9.5px;line-height:13px;color:#fff;font-weight:700;transform:translateX(-50%);">P</span>
<span class="t " style="left:905.75px;top:224.50px;font-size:9px;line-height:13px;color:#444;letter-spacing:0.385px;-webkit-text-stroke:.35px #444;">Procedure</span>
<div class="b" style="left:963.0px;top:225.25px;width:11.5px;height:11.5px;background:#727476;border-radius:50%;"></div>
<span class="t " style="left:968.75px;top:224.70px;font-size:9.5px;line-height:13px;color:#fff;font-weight:700;transform:translateX(-50%);">T</span>
<span class="t " style="left:979px;top:224.50px;font-size:9px;line-height:13px;color:#444;letter-spacing:0.371px;-webkit-text-stroke:.35px #444;">Test</span>
<div class="b" style="left:469px;top:251px;width:1429.5px;height:418.5px;background:#fff;border:1px solid #e9e9e9;"></div>
<div class="b" style="left:470px;top:251.25px;width:1427.5px;height:32.5px;background:#f4f4f4;"></div>
<span class="t " style="left:477px;top:260.90px;font-size:10.8px;line-height:15px;color:#111;font-weight:700;letter-spacing:0.099px;">ISM</span>
<svg class="b" style="left:556.25px;top:261.75px;" width="20" height="12.5" viewBox="0 0 20 12.5"><circle cx="6.25" cy="6.25" r="6.25" fill="#1a9be0"/><path d="M6.25 2.8 V9.2 M3.6 6.8 L6.25 9.4 L8.9 6.8" fill="none" stroke="#fff" stroke-width="1.5" stroke-linecap="round" stroke-linejoin="round"/><path d="M16.2 10 V3 M14.6 4.6 L16.2 3 L17.8 4.6" fill="none" stroke="#d0d0d0" stroke-width=".9"/></svg>
<span class="t " style="left:592.5px;top:260.90px;font-size:10.8px;line-height:15px;color:#111;font-weight:700;letter-spacing:0.023px;">Type</span>
<svg class="b" style="left:638.5px;top:261.6px;" width="12" height="12" viewBox="0 0 12 12"><circle cx="6" cy="6" r="5.2" fill="none" stroke="#3fbf7a" stroke-width=".9"/><path d="M3.4 6.2 L5.3 8 L8.7 4.2" fill="none" stroke="#3fbf7a" stroke-width=".9" stroke-linecap="round" stroke-linejoin="round"/></svg>
<span class="t " style="left:654px;top:260.90px;font-size:10.8px;line-height:15px;color:#111;font-weight:700;letter-spacing:-0.305px;">Pass</span>
<svg class="b" style="left:715.75px;top:261.6px;" width="12" height="12" viewBox="0 0 12 12"><circle cx="6" cy="6" r="5.2" fill="none" stroke="#2a8fd6" stroke-width=".9"/><path d="M3.4 6.2 L5.3 8 L8.7 4.2" fill="none" stroke="#2a8fd6" stroke-width=".9" stroke-linecap="round" stroke-linejoin="round"/></svg>
<span class="t " style="left:731.25px;top:260.90px;font-size:10.8px;line-height:15px;color:#111;font-weight:700;letter-spacing:-0.069px;">Override Pass</span>
<svg class="b" style="left:839.5px;top:261.6px;" width="12" height="12" viewBox="0 0 12 12"><circle cx="6" cy="6" r="5.2" fill="none" stroke="#e03030" stroke-width=".9"/><path d="M4.1 4.1 L7.9 7.9 M7.9 4.1 L4.1 7.9" stroke="#e03030" stroke-width=".9" stroke-linecap="round"/></svg>
<span class="t " style="left:855.25px;top:260.90px;font-size:10.8px;line-height:15px;color:#111;font-weight:700;letter-spacing:-0.277px;">Fail</span>
<svg class="b" style="left:907.5px;top:261.6px;" width="12" height="12" viewBox="0 0 12 12"><circle cx="6" cy="6" r="5.2" fill="none" stroke="#a8a8a8" stroke-width=".9"/><path d="M3.6 6 H8.4" stroke="#a8a8a8" stroke-width="1"/></svg>
<span class="t " style="left:923px;top:260.90px;font-size:10.8px;line-height:15px;color:#111;font-weight:700;letter-spacing:0.040px;">Not Applicable</span>
<svg class="b" style="left:1036.5px;top:261.6px;" width="12" height="12" viewBox="0 0 12 12"><circle cx="6" cy="6" r="5.2" fill="none" stroke="#333" stroke-width=".9"/><path d="M2.4 2.4 L9.6 9.6" stroke="#333" stroke-width=".9"/></svg>
<span class="t " style="left:1052.5px;top:260.90px;font-size:10.8px;line-height:15px;color:#111;font-weight:700;letter-spacing:-0.212px;">Not Run</span>
<span class="t " style="left:1119.5px;top:260.90px;font-size:10.8px;line-height:15px;color:#111;font-weight:700;letter-spacing:0.054px;">Description</span>
<span class="t " style="left:1843.2px;top:260.90px;font-size:10.8px;line-height:15px;color:#111;font-weight:700;letter-spacing:-0.126px;">Link</span>
<div class="b" style="left:478.75px;top:292.9px;width:89.5px;height:24.6px;background:#17c45f;border-radius:13px;box-shadow:0 0 2px rgba(30,190,100,.35);"></div>
<span class="t " style="left:523.4px;top:298.80px;font-size:10.3px;line-height:14px;color:#fff;font-weight:700;letter-spacing:0.459px;transform:translateX(-50%);">ISM 1488</span>
<div class="b" style="left:595.525px;top:298.425px;width:12.75px;height:12.75px;background:#727476;border-radius:50%;"></div>
<span class="t " style="left:601.9px;top:297.50px;font-size:10.5px;line-height:15px;color:#fff;font-weight:700;transform:translateX(-50%);">T</span>
<span class="t u" style="left:658.5px;top:298.00px;font-size:11px;line-height:15px;color:#153c68;letter-spacing:0.050px;transform:translateX(-50%);-webkit-text-stroke:.2px #153c68;">153</span>
<span class="t " style="left:759.5px;top:298.00px;font-size:11px;line-height:15px;color:#333;transform:translateX(-50%);">0</span>
<span class="t " style="left:856.25px;top:298.00px;font-size:11px;line-height:15px;color:#333;transform:translateX(-50%);">0</span>
<span class="t u" style="left:953.25px;top:298.00px;font-size:11px;line-height:15px;color:#153c68;transform:translateX(-50%);-webkit-text-stroke:.2px #153c68;">1</span>
<span class="t u" style="left:1065px;top:298.00px;font-size:11px;line-height:15px;color:#153c68;transform:translateX(-50%);-webkit-text-stroke:.2px #153c68;">2</span>
<span class="t " style="left:1121.25px;top:298.10px;font-size:10.8px;line-height:15px;color:#2c2c2c;letter-spacing:0.292px;">Microsoft Office macros in files originating from the internet are blocked.</span>
<svg class="b" style="left:1828.8px;top:299.2px;" width="12" height="12" viewBox="0 0 12 12"><path d="M9.5 6.8 V10 A.9 .9 0 0 1 8.6 10.9 H2 A.9 .9 0 0 1 1.1 10 V3.4 A.9 .9 0 0 1 2 2.5 H5.2" fill="none" stroke="#4f6a86" stroke-width=".9"/><path d="M4.8 7.2 L10.6 1.4 M7.2 1.2 H10.8 V4.8" fill="none" stroke="#4f6a86" stroke-width=".9"/></svg>
<span class="t u" style="left:1843.2px;top:298.00px;font-size:11px;line-height:15px;color:#153c68;font-weight:700;letter-spacing:-0.113px;">Advice</span>
<div class="b" style="left:470px;top:326.25px;width:1427.5px;height:1px;background:#efefef;"></div>
<div class="b" style="left:478.75px;top:336.4px;width:89.5px;height:24.6px;background:#17c45f;border-radius:13px;box-shadow:0 0 2px rgba(30,190,100,.35);"></div>
<span class="t " style="left:523.4px;top:342.30px;font-size:10.3px;line-height:14px;color:#fff;font-weight:700;letter-spacing:0.459px;transform:translateX(-50%);">ISM 1489</span>
<div class="b" style="left:595.525px;top:341.925px;width:12.75px;height:12.75px;background:#727476;border-radius:50%;"></div>
<span class="t " style="left:601.9px;top:341.00px;font-size:10.5px;line-height:15px;color:#fff;font-weight:700;transform:translateX(-50%);">T</span>
<span class="t u" style="left:658.5px;top:341.50px;font-size:11px;line-height:15px;color:#153c68;letter-spacing:0.050px;transform:translateX(-50%);-webkit-text-stroke:.2px #153c68;">153</span>
<span class="t " style="left:759.5px;top:341.50px;font-size:11px;line-height:15px;color:#333;transform:translateX(-50%);">0</span>
<span class="t " style="left:856.25px;top:341.50px;font-size:11px;line-height:15px;color:#333;transform:translateX(-50%);">0</span>
<span class="t u" style="left:953.25px;top:341.50px;font-size:11px;line-height:15px;color:#153c68;transform:translateX(-50%);-webkit-text-stroke:.2px #153c68;">1</span>
<span class="t u" style="left:1065px;top:341.50px;font-size:11px;line-height:15px;color:#153c68;transform:translateX(-50%);-webkit-text-stroke:.2px #153c68;">2</span>
<span class="t " style="left:1121.25px;top:341.60px;font-size:10.8px;line-height:15px;color:#2c2c2c;letter-spacing:0.307px;">Microsoft Office macro security settings cannot be changed by users.</span>
<svg class="b" style="left:1828.8px;top:342.7px;" width="12" height="12" viewBox="0 0 12 12"><path d="M9.5 6.8 V10 A.9 .9 0 0 1 8.6 10.9 H2 A.9 .9 0 0 1 1.1 10 V3.4 A.9 .9 0 0 1 2 2.5 H5.2" fill="none" stroke="#4f6a86" stroke-width=".9"/><path d="M4.8 7.2 L10.6 1.4 M7.2 1.2 H10.8 V4.8" fill="none" stroke="#4f6a86" stroke-width=".9"/></svg>
<span class="t u" style="left:1843.2px;top:341.50px;font-size:11px;line-height:15px;color:#153c68;font-weight:700;letter-spacing:-0.113px;">Advice</span>
<div class="b" style="left:470px;top:369.85px;width:1427.5px;height:1px;background:#efefef;"></div>
<div class="b" style="left:478.75px;top:379.9px;width:89.5px;height:24.6px;background:#ffb60a;border-radius:13px;"></div>
<span class="t " style="left:523.4px;top:385.80px;font-size:10.3px;line-height:14px;color:#5c4a12;letter-spacing:0.459px;transform:translateX(-50%);">ISM 1671</span>
<div class="b" style="left:595.525px;top:385.425px;width:12.75px;height:12.75px;background:#727476;border-radius:50%;"></div>
<span class="t " style="left:601.9px;top:384.50px;font-size:10.5px;line-height:15px;color:#fff;font-weight:700;transform:translateX(-50%);">T</span>
<span class="t " style="left:658.5px;top:385.00px;font-size:11px;line-height:15px;color:#333;transform:translateX(-50%);">0</span>
<span class="t u" style="left:759.5px;top:385.00px;font-size:11px;line-height:15px;color:#153c68;letter-spacing:0.459px;transform:translateX(-50%);-webkit-text-stroke:.2px #153c68;">11</span>
<span class="t u" style="left:856.25px;top:385.00px;font-size:11px;line-height:15px;color:#153c68;letter-spacing:0.050px;transform:translateX(-50%);-webkit-text-stroke:.2px #153c68;">142</span>
<span class="t u" style="left:953.25px;top:385.00px;font-size:11px;line-height:15px;color:#153c68;transform:translateX(-50%);-webkit-text-stroke:.2px #153c68;">1</span>
<span class="t u" style="left:1065px;top:385.00px;font-size:11px;line-height:15px;color:#153c68;transform:translateX(-50%);-webkit-text-stroke:.2px #153c68;">2</span>
<span class="t " style="left:1121.25px;top:385.10px;font-size:10.8px;line-height:15px;color:#2c2c2c;letter-spacing:0.278px;">Microsoft Office macros are disabled for users that do not have a demonstrated business requirement.</span>
<svg class="b" style="left:1828.8px;top:386.2px;" width="12" height="12" viewBox="0 0 12 12"><path d="M9.5 6.8 V10 A.9 .9 0 0 1 8.6 10.9 H2 A.9 .9 0 0 1 1.1 10 V3.4 A.9 .9 0 0 1 2 2.5 H5.2" fill="none" stroke="#4f6a86" stroke-width=".9"/><path d="M4.8 7.2 L10.6 1.4 M7.2 1.2 H10.8 V4.8" fill="none" stroke="#4f6a86" stroke-width=".9"/></svg>
<span class="t u" style="left:1843.2px;top:385.00px;font-size:11px;line-height:15px;color:#153c68;font-weight:700;letter-spacing:-0.113px;">Advice</span>
<div class="b" style="left:470px;top:413.45px;width:1427.5px;height:1px;background:#efefef;"></div>
<div class="b" style="left:478.75px;top:423.4px;width:89.5px;height:24.6px;background:#17c45f;border-radius:13px;box-shadow:0 0 2px rgba(30,190,100,.35);"></div>
<span class="t " style="left:523.4px;top:429.30px;font-size:10.3px;line-height:14px;color:#fff;font-weight:700;letter-spacing:0.459px;transform:translateX(-50%);">ISM 1672</span>
<div class="b" style="left:595.525px;top:428.925px;width:12.75px;height:12.75px;background:#727476;border-radius:50%;"></div>
<span class="t " style="left:601.9px;top:428.00px;font-size:10.5px;line-height:15px;color:#fff;font-weight:700;transform:translateX(-50%);">T</span>
<span class="t u" style="left:658.5px;top:428.50px;font-size:11px;line-height:15px;color:#153c68;letter-spacing:0.050px;transform:translateX(-50%);-webkit-text-stroke:.2px #153c68;">153</span>
<span class="t " style="left:759.5px;top:428.50px;font-size:11px;line-height:15px;color:#333;transform:translateX(-50%);">0</span>
<span class="t " style="left:856.25px;top:428.50px;font-size:11px;line-height:15px;color:#333;transform:translateX(-50%);">0</span>
<span class="t u" style="left:953.25px;top:428.50px;font-size:11px;line-height:15px;color:#153c68;transform:translateX(-50%);-webkit-text-stroke:.2px #153c68;">1</span>
<span class="t u" style="left:1065px;top:428.50px;font-size:11px;line-height:15px;color:#153c68;transform:translateX(-50%);-webkit-text-stroke:.2px #153c68;">2</span>
<span class="t " style="left:1121.25px;top:428.60px;font-size:10.8px;line-height:15px;color:#2c2c2c;letter-spacing:0.265px;">Microsoft Office macro antivirus scanning is enabled.</span>
<svg class="b" style="left:1828.8px;top:429.7px;" width="12" height="12" viewBox="0 0 12 12"><path d="M9.5 6.8 V10 A.9 .9 0 0 1 8.6 10.9 H2 A.9 .9 0 0 1 1.1 10 V3.4 A.9 .9 0 0 1 2 2.5 H5.2" fill="none" stroke="#4f6a86" stroke-width=".9"/><path d="M4.8 7.2 L10.6 1.4 M7.2 1.2 H10.8 V4.8" fill="none" stroke="#4f6a86" stroke-width=".9"/></svg>
<span class="t u" style="left:1843.2px;top:428.50px;font-size:11px;line-height:15px;color:#153c68;font-weight:700;letter-spacing:-0.113px;">Advice</span>
<div class="b" style="left:470px;top:457.05px;width:1427.5px;height:1px;background:#efefef;"></div>
<span class="t " style="left:468.6px;top:679.50px;font-size:10.8px;line-height:15px;color:#9a9a9a;letter-spacing:0.099px;">Display</span>
<span class="t " style="left:514.6px;top:680.00px;font-size:10.3px;line-height:14px;color:#7d7d7d;font-weight:700;letter-spacing:0.231px;">dynamic</span>
<svg class="b" style="left:564px;top:685px;" width="7" height="5" viewBox="0 0 7 5"><path d="M1 1 L3.5 3.6 L6 1" fill="none" stroke="#666" stroke-width="1.1" stroke-linecap="round" stroke-linejoin="round"/></svg>
<div class="b" style="left:508.5px;top:693px;width:65.5px;height:1px;background:#e4e4e4;"></div>
<span class="t " style="left:576.7px;top:679.50px;font-size:10.8px;line-height:15px;color:#9a9a9a;letter-spacing:0.248px;">entries per page</span>
<span class="t " style="left:1116px;top:679.50px;font-size:10.8px;line-height:15px;color:#9a9a9a;letter-spacing:0.264px;">Showing 1 to 4 of 4 entries</span>
<div class="b" style="left:261px;top:707px;width:1637px;height:1px;background:#f3f3f3;"></div>
<span class="t " style="left:261.5px;top:719.00px;font-size:15.5px;line-height:22px;color:#0c2d52;font-weight:700;letter-spacing:0.001px;">Compliance: Monthly Trending</span>
<div class="b" style="left:243px;top:1021.5px;width:1674px;height:24.5px;background:#004074;border-radius:0 0 7px 0;"></div>
<span class="t " style="left:1893px;top:1026.80px;font-size:10px;line-height:14px;color:#fff;letter-spacing:0.387px;transform:translateX(-100%);-webkit-text-stroke:.25px #fff;">2026 © Introspectus</span>
<svg class="b" style="left:243px;top:745px;font-family:&quot;Liberation Sans&quot;,sans-serif;" width="1680" height="240" viewBox="0 0 1680 240"><path d="M38.10 203.75 H1655.90" stroke="#ebebeb" stroke-width="1"/><text x="35.50" y="206.35" text-anchor="end" font-size="9.4" fill="#666">0</text><path d="M38.10 182.03 H1655.90" stroke="#ebebeb" stroke-width="1"/><text x="35.50" y="184.63" text-anchor="end" font-size="9.4" fill="#666">20</text><path d="M38.10 160.31 H1655.90" stroke="#ebebeb" stroke-width="1"/><text x="35.50" y="162.91" text-anchor="end" font-size="9.4" fill="#666">40</text><path d="M38.10 138.58 H1655.90" stroke="#ebebeb" stroke-width="1"/><text x="35.50" y="141.18" text-anchor="end" font-size="9.4" fill="#666">60</text><path d="M38.10 116.86 H1655.90" stroke="#ebebeb" stroke-width="1"/><text x="35.50" y="119.46" text-anchor="end" font-size="9.4" fill="#666">80</text><path d="M38.10 95.14 H1655.90" stroke="#ebebeb" stroke-width="1"/><text x="35.50" y="97.74" text-anchor="end" font-size="9.4" fill="#666">100</text><path d="M38.10 73.42 H1655.90" stroke="#ebebeb" stroke-width="1"/><text x="35.50" y="76.02" text-anchor="end" font-size="9.4" fill="#666">120</text><path d="M38.10 51.69 H1655.90" stroke="#ebebeb" stroke-width="1"/><text x="35.50" y="54.29" text-anchor="end" font-size="9.4" fill="#666">140</text><path d="M38.10 29.97 H1655.90" stroke="#ebebeb" stroke-width="1"/><text x="35.50" y="32.57" text-anchor="end" font-size="9.4" fill="#666">160</text><path d="M38.10 8.25 H1655.90" stroke="#ebebeb" stroke-width="1"/><text x="35.50" y="10.85" text-anchor="end" font-size="9.4" fill="#666">180</text><path d="M44.10 8.25 V209.75" stroke="#e3e3e3" stroke-width=".8"/><path d="M101.66 8.25 V209.75" stroke="#e3e3e3" stroke-width=".8"/><path d="M159.23 8.25 V209.75" stroke="#e3e3e3" stroke-width=".8"/><path d="M216.79 8.25 V209.75" stroke="#e3e3e3" stroke-width=".8"/><path d="M274.36 8.25 V209.75" stroke="#e3e3e3" stroke-width=".8"/><path d="M331.92 8.25 V209.75" stroke="#e3e3e3" stroke-width=".8"/><path d="M389.49 8.25 V209.75" stroke="#e3e3e3" stroke-width=".8"/><path d="M447.05 8.25 V209.75" stroke="#e3e3e3" stroke-width=".8"/><path d="M504.61 8.25 V209.75" stroke="#e3e3e3" stroke-width=".8"/><path d="M562.18 8.25 V209.75" stroke="#e3e3e3" stroke-width=".8"/><path d="M619.74 8.25 V209.75" stroke="#e3e3e3" stroke-width=".8"/><path d="M677.31 8.25 V209.75" stroke="#e3e3e3" stroke-width=".8"/><path d="M734.87 8.25 V209.75" stroke="#e3e3e3" stroke-width=".8"/><path d="M792.44 8.25 V209.75" stroke="#e3e3e3" stroke-width=".8"/><path d="M850.00 8.25 V209.75" stroke="#e3e3e3" stroke-width=".8"/><path d="M907.56 8.25 V209.75" stroke="#e3e3e3" stroke-width=".8"/><path d="M965.13 8.25 V209.75" stroke="#e3e3e3" stroke-width=".8"/><path d="M1022.69 8.25 V209.75" stroke="#e3e3e3" stroke-width=".8"/><path d="M1080.26 8.25 V209.75" stroke="#e3e3e3" stroke-width=".8"/><path d="M1137.82 8.25 V209.75" stroke="#e3e3e3" stroke-width=".8"/><path d="M1195.39 8.25 V209.75" stroke="#e3e3e3" stroke-width=".8"/><path d="M1252.95 8.25 V209.75" stroke="#e3e3e3" stroke-width=".8"/><path d="M1310.51 8.25 V209.75" stroke="#e3e3e3" stroke-width=".8"/><path d="M1368.08 8.25 V209.75" stroke="#e3e3e3" stroke-width=".8"/><path d="M1425.64 8.25 V209.75" stroke="#e3e3e3" stroke-width=".8"/><path d="M1483.21 8.25 V209.75" stroke="#e3e3e3" stroke-width=".8"/><path d="M1540.77 8.25 V209.75" stroke="#e3e3e3" stroke-width=".8"/><path d="M1598.34 8.25 V209.75" stroke="#e3e3e3" stroke-width=".8"/><path d="M1655.90 8.25 V209.75" stroke="#e3e3e3" stroke-width=".8"/><rect x="50.62" y="48.44" width="13.82" height="155.31" fill="#ff0000"/><rect x="65.97" y="196.15" width="13.82" height="7.60" fill="#17c45f"/><rect x="81.32" y="185.29" width="13.82" height="18.46" fill="#2196ee"/><text x="71.68" y="219.60" text-anchor="middle" font-size="9.4" fill="#666">Feb 24</text><rect x="108.19" y="43.01" width="13.82" height="160.74" fill="#ff0000"/><rect x="123.54" y="197.23" width="13.82" height="6.52" fill="#17c45f"/><rect x="138.89" y="183.11" width="13.82" height="20.64" fill="#2196ee"/><text x="129.25" y="219.60" text-anchor="middle" font-size="9.4" fill="#666">Feb 25</text><rect x="165.75" y="47.35" width="13.82" height="156.40" fill="#ff0000"/><rect x="181.10" y="195.06" width="13.82" height="8.69" fill="#17c45f"/><rect x="196.45" y="185.29" width="13.82" height="18.46" fill="#2196ee"/><text x="186.81" y="219.60" text-anchor="middle" font-size="9.4" fill="#666">Feb 26</text><rect x="223.32" y="65.81" width="13.82" height="137.94" fill="#ff0000"/><rect x="238.67" y="198.32" width="13.82" height="5.43" fill="#17c45f"/><rect x="254.02" y="187.46" width="13.82" height="16.29" fill="#2196ee"/><text x="244.38" y="219.60" text-anchor="middle" font-size="9.4" fill="#666">Feb 27</text><rect x="280.88" y="157.05" width="13.82" height="46.70" fill="#ff0000"/><rect x="296.23" y="198.32" width="13.82" height="5.43" fill="#17c45f"/><rect x="311.58" y="196.15" width="13.82" height="7.60" fill="#2196ee"/><text x="301.94" y="219.60" text-anchor="middle" font-size="9.4" fill="#666">Feb 28</text><rect x="338.45" y="141.84" width="13.82" height="61.91" fill="#ff0000"/><rect x="353.80" y="198.32" width="13.82" height="5.43" fill="#17c45f"/><rect x="369.15" y="190.72" width="13.82" height="13.03" fill="#2196ee"/><text x="359.50" y="219.60" text-anchor="middle" font-size="9.4" fill="#666">Mar 1</text><rect x="396.01" y="22.37" width="13.82" height="181.38" fill="#ff0000"/><rect x="411.36" y="191.80" width="13.82" height="11.95" fill="#17c45f"/><rect x="426.71" y="184.20" width="13.82" height="19.55" fill="#2196ee"/><text x="417.07" y="219.60" text-anchor="middle" font-size="9.4" fill="#666">Mar 2</text><rect x="453.57" y="25.63" width="13.82" height="178.12" fill="#ff0000"/><rect x="468.92" y="199.41" width="13.82" height="4.34" fill="#17c45f"/><rect x="484.27" y="186.37" width="13.82" height="17.38" fill="#2196ee"/><text x="474.63" y="219.60" text-anchor="middle" font-size="9.4" fill="#666">Mar 3</text><rect x="511.14" y="28.89" width="13.82" height="174.86" fill="#ff0000"/><rect x="526.49" y="199.41" width="13.82" height="4.34" fill="#17c45f"/><rect x="541.84" y="185.29" width="13.82" height="18.46" fill="#2196ee"/><text x="532.20" y="219.60" text-anchor="middle" font-size="9.4" fill="#666">Mar 4</text><rect x="568.70" y="26.71" width="13.82" height="177.04" fill="#ff0000"/><rect x="584.05" y="199.41" width="13.82" height="4.34" fill="#17c45f"/><rect x="599.40" y="185.29" width="13.82" height="18.46" fill="#2196ee"/><text x="589.76" y="219.60" text-anchor="middle" font-size="9.4" fill="#666">Mar 5</text><rect x="626.27" y="48.44" width="13.82" height="155.31" fill="#ff0000"/><rect x="641.62" y="199.41" width="13.82" height="4.34" fill="#17c45f"/><rect x="656.97" y="185.29" width="13.82" height="18.46" fill="#2196ee"/><text x="647.33" y="219.60" text-anchor="middle" font-size="9.4" fill="#666">Mar 6</text><rect x="683.83" y="130.98" width="13.82" height="72.77" fill="#ff0000"/><rect x="699.18" y="199.41" width="13.82" height="4.34" fill="#17c45f"/><rect x="714.53" y="191.80" width="13.82" height="11.95" fill="#2196ee"/><text x="704.89" y="219.60" text-anchor="middle" font-size="9.4" fill="#666">Mar 7</text><rect x="741.40" y="134.24" width="13.82" height="69.51" fill="#ff0000"/><rect x="756.75" y="199.41" width="13.82" height="4.34" fill="#17c45f"/><rect x="772.10" y="191.80" width="13.82" height="11.95" fill="#2196ee"/><text x="762.45" y="219.60" text-anchor="middle" font-size="9.4" fill="#666">Mar 8</text><rect x="798.96" y="57.12" width="13.82" height="146.62" fill="#ff0000"/><rect x="814.31" y="199.41" width="13.82" height="4.34" fill="#17c45f"/><rect x="829.66" y="188.54" width="13.82" height="15.21" fill="#2196ee"/><text x="820.02" y="219.60" text-anchor="middle" font-size="9.4" fill="#666">Mar 9</text><rect x="856.52" y="37.58" width="13.82" height="166.17" fill="#ff0000"/><rect x="871.87" y="199.41" width="13.82" height="4.34" fill="#17c45f"/><rect x="887.22" y="186.37" width="13.82" height="17.38" fill="#2196ee"/><text x="877.58" y="219.60" text-anchor="middle" font-size="9.4" fill="#666">Mar 10</text><rect x="914.09" y="36.49" width="13.82" height="167.26" fill="#ff0000"/><rect x="929.44" y="197.23" width="13.82" height="6.52" fill="#17c45f"/><rect x="944.79" y="186.37" width="13.82" height="17.38" fill="#2196ee"/><text x="935.15" y="219.60" text-anchor="middle" font-size="9.4" fill="#666">Mar 11</text><rect x="971.65" y="35.40" width="13.82" height="168.35" fill="#ff0000"/><rect x="987.00" y="197.23" width="13.82" height="6.52" fill="#17c45f"/><rect x="1002.35" y="187.46" width="13.82" height="16.29" fill="#2196ee"/><text x="992.71" y="219.60" text-anchor="middle" font-size="9.4" fill="#666">Mar 12</text><rect x="1029.22" y="52.78" width="13.82" height="150.97" fill="#ff0000"/><rect x="1044.57" y="198.32" width="13.82" height="5.43" fill="#17c45f"/><rect x="1059.92" y="191.80" width="13.82" height="11.95" fill="#2196ee"/><text x="1050.28" y="219.60" text-anchor="middle" font-size="9.4" fill="#666">Mar 13</text><rect x="1086.78" y="184.20" width="13.82" height="19.55" fill="#ff0000"/><rect x="1102.13" y="201.58" width="13.82" height="2.17" fill="#17c45f"/><rect x="1117.48" y="198.32" width="13.82" height="5.43" fill="#2196ee"/><text x="1107.84" y="219.60" text-anchor="middle" font-size="9.4" fill="#666">Mar 14</text><rect x="1144.35" y="182.03" width="13.82" height="21.72" fill="#ff0000"/><rect x="1159.70" y="201.58" width="13.82" height="2.17" fill="#17c45f"/><rect x="1175.05" y="198.32" width="13.82" height="5.43" fill="#2196ee"/><text x="1165.40" y="219.60" text-anchor="middle" font-size="9.4" fill="#666">Mar 15</text><rect x="1201.91" y="94.05" width="13.82" height="109.70" fill="#ff0000"/><rect x="1232.61" y="192.89" width="13.82" height="10.86" fill="#2196ee"/><text x="1222.97" y="219.60" text-anchor="middle" font-size="9.4" fill="#666">Mar 16</text><rect x="1259.47" y="54.95" width="13.82" height="148.80" fill="#ff0000"/><rect x="1274.82" y="201.58" width="13.82" height="2.17" fill="#17c45f"/><rect x="1290.17" y="187.46" width="13.82" height="16.29" fill="#2196ee"/><text x="1280.53" y="219.60" text-anchor="middle" font-size="9.4" fill="#666">Mar 17</text><rect x="1317.04" y="56.04" width="13.82" height="147.71" fill="#ff0000"/><rect x="1332.39" y="200.49" width="13.82" height="3.26" fill="#17c45f"/><rect x="1347.74" y="189.63" width="13.82" height="14.12" fill="#2196ee"/><text x="1338.10" y="219.60" text-anchor="middle" font-size="9.4" fill="#666">Mar 18</text><rect x="1374.60" y="49.52" width="13.82" height="154.23" fill="#ff0000"/><rect x="1389.95" y="198.32" width="13.82" height="5.43" fill="#17c45f"/><rect x="1405.30" y="187.46" width="13.82" height="16.29" fill="#2196ee"/><text x="1395.66" y="219.60" text-anchor="middle" font-size="9.4" fill="#666">Mar 19</text><rect x="1432.17" y="60.38" width="13.82" height="143.37" fill="#ff0000"/><rect x="1447.52" y="197.23" width="13.82" height="6.52" fill="#17c45f"/><rect x="1462.87" y="191.80" width="13.82" height="11.95" fill="#2196ee"/><text x="1453.23" y="219.60" text-anchor="middle" font-size="9.4" fill="#666">Mar 20</text><rect x="1489.73" y="126.64" width="13.82" height="77.11" fill="#ff0000"/><rect x="1505.08" y="200.49" width="13.82" height="3.26" fill="#17c45f"/><rect x="1520.43" y="197.23" width="13.82" height="6.52" fill="#2196ee"/><text x="1510.79" y="219.60" text-anchor="middle" font-size="9.4" fill="#666">Mar 21</text><rect x="1547.30" y="130.98" width="13.82" height="72.77" fill="#ff0000"/><rect x="1562.65" y="201.58" width="13.82" height="2.17" fill="#17c45f"/><rect x="1578.00" y="197.23" width="13.82" height="6.52" fill="#2196ee"/><text x="1568.35" y="219.60" text-anchor="middle" font-size="9.4" fill="#666">Mar 22</text><rect x="1604.86" y="49.52" width="13.82" height="154.23" fill="#ff0000"/><rect x="1620.21" y="200.49" width="13.82" height="3.26" fill="#17c45f"/><rect x="1635.56" y="191.80" width="13.82" height="11.95" fill="#2196ee"/><text x="1625.92" y="219.60" text-anchor="middle" font-size="9.4" fill="#666">Mar 23</text></svg>
<div class="b" style="left:1677px;top:991.2px;width:26px;height:13.6px;background:#17c45f;border-radius:7px;"></div>
<span class="t " style="left:1706.5px;top:991.90px;font-size:9px;line-height:13px;color:#333;letter-spacing:0.121px;-webkit-text-stroke:.4px #333;">Pass</span>
<div class="b" style="left:1739.5px;top:991.2px;width:26px;height:13.6px;background:#ff0000;border-radius:7px;"></div>
<span class="t " style="left:1768.5px;top:991.90px;font-size:9px;line-height:13px;color:#333;letter-spacing:0.246px;-webkit-text-stroke:.4px #333;">Fail</span>
<div class="b" style="left:1796.5px;top:991.2px;width:26px;height:13.6px;background:#1a9be0;border-radius:7px;"></div>
<span class="t " style="left:1825.5px;top:991.90px;font-size:9px;line-height:13px;color:#333;letter-spacing:0.344px;-webkit-text-stroke:.4px #333;">Override Pass</span>
</div>
</body></html>
